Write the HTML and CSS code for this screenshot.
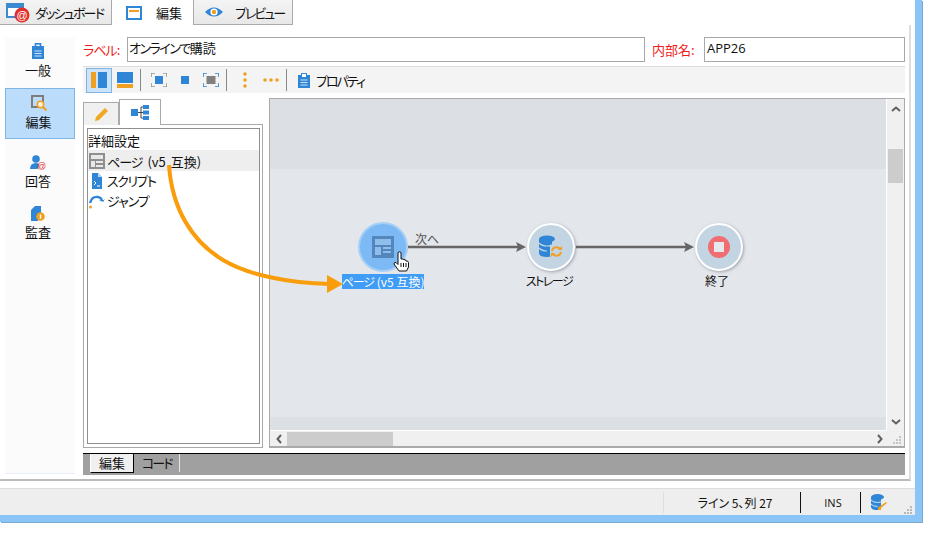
FILE: index.html
```html
<!DOCTYPE html>
<html lang="ja">
<head>
    <meta charset="UTF-8">
    <title>オンラインで購読</title>
    <link rel="stylesheet" href="styles.css">
</head>
<body>
<div class="window">
    <div class="tabs">
        <div class="tab tab-dash">
            <svg class="tab-icon" width="28" height="22" viewBox="0 0 28 22"><rect x="1" y="3" width="16" height="13" fill="#fff" stroke="#3c8ad0" stroke-width="2"/><rect x="1" y="3" width="16" height="4" fill="#3c8ad0"/><circle cx="16" cy="14" r="7.5" fill="#e2302c"/><text x="16" y="18" class="at">@</text></svg>
            <span>ダッシュボード</span>
        </div>
        <div class="tab tab-edit">
            <svg class="tab-icon" width="16" height="14" viewBox="0 0 16 14"><rect x="1" y="1" width="14" height="12" fill="#fff" stroke="#2f86d6" stroke-width="2"/><rect x="3" y="4" width="10" height="2" fill="#f0a020"/></svg>
            <span>編集</span>
        </div>
        <div class="tab tab-preview">
            <svg class="tab-icon" width="18" height="12" viewBox="0 0 18 12"><path d="M0 6Q9 -3 18 6Q9 15 0 6Z" fill="#2f86d6"/><circle cx="9" cy="6" r="3.6" fill="#fff"/><circle cx="9" cy="6" r="2.2" fill="#f0a020"/></svg>
            <span>プレビュー</span>
        </div>
    </div>

    <div class="main">
        <div class="sidebar">
            <div class="side-item">
                <svg width="12" height="16" viewBox="0 0 12 16"><rect y="3" width="12" height="13" fill="#2f86d6"/><rect x="3.500" y="0.800" width="5" height="4" fill="none" stroke="#2f86d6" stroke-width="1.600"/><path d="M2.500 8h7M2.500 10.500h7M2.500 13h7" stroke="#cfe3f6"/></svg>
                <span>一般</span>
            </div>
            <div class="side-item active">
                <svg width="16" height="16" viewBox="0 0 16 16"><path d="M1 1h11v11h-11z" fill="none" stroke="#7d7d7d" stroke-width="2"/><circle cx="9.500" cy="9.500" r="3.200" fill="#fff3dd" stroke="#f0a020" stroke-width="1.500"/><path d="M12 12l3.500 3.500" stroke="#f0a020" stroke-width="2"/></svg>
                <span>編集</span>
            </div>
            <div class="side-item answers">
                <svg width="16" height="15" viewBox="0 0 16 15"><circle cx="6" cy="4" r="3.800" fill="#2f86d6"/><path d="M0 14q0-6 6-6 2.500 0 3.500 1.500l-2 4.500z" fill="#2f86d6"/><text x="11.500" y="14" class="at-small">@</text></svg>
                <span>回答</span>
            </div>
            <div class="side-item">
                <svg width="14" height="16" viewBox="0 0 14 16"><path d="M0 5l4-4h6v7h-3v8H0z" fill="#2f86d6"/><circle cx="9.500" cy="11.500" r="4.300" fill="#f0a020"/><rect x="8.800" y="9.500" width="1.400" height="4.200" fill="#fff"/></svg>
                <span>監査</span>
            </div>
        </div>

        <div class="content">
            <div class="form-row">
                <label class="field-label"><span class="kana">ラベル</span>:</label>
                <div class="input input-label"><span class="kana-wide">オンラインで</span>購読</div>
                <label class="field-label label-name">内部名:</label>
                <div class="input input-name">APP26</div>
            </div>

            <div class="toolbar">
                <div class="tool on"><svg width="16" height="16" viewBox="0 0 16 16"><rect width="5" height="16" fill="#f0a020"/><rect x="7" width="9" height="16" fill="#2f86d6"/></svg></div>
                <div class="tool"><svg width="16" height="16" viewBox="0 0 16 16"><rect width="16" height="11" fill="#2f86d6"/><rect y="12" width="16" height="4" fill="#f0a020"/></svg></div>
                <i class="sep"></i>
                <div class="tool"><svg width="16" height="14" viewBox="0 0 16 14"><rect x="4" y="3" width="8" height="8" fill="#2f86d6"/><path d="M0 4V0h4M12 0h4v4M16 10v4h-4M4 14H0v-4" fill="none" stroke="#999" stroke-width="1.600"/></svg></div>
                <div class="tool"><svg width="16" height="14" viewBox="0 0 16 14"><rect x="4" y="3" width="8" height="8" fill="#2f86d6"/></svg></div>
                <div class="tool"><svg width="16" height="14" viewBox="0 0 16 14"><rect x="3.500" y="3" width="9" height="8" fill="#808080"/><path d="M0 4V0h4M12 0h4v4M16 10v4h-4M4 14H0v-4" fill="none" stroke="#2f86d6" stroke-width="1.600"/></svg></div>
                <i class="sep"></i>
                <div class="tool"><svg width="4" height="16" viewBox="0 0 4 16"><circle cx="2" cy="2" r="1.800" fill="#f0a020"/><circle cx="2" cy="8" r="1.800" fill="#f0a020"/><circle cx="2" cy="14" r="1.800" fill="#f0a020"/></svg></div>
                <div class="tool"><svg width="16" height="4" viewBox="0 0 16 4"><circle cx="2" cy="2" r="1.800" fill="#f0a020"/><circle cx="8" cy="2" r="1.800" fill="#f0a020"/><circle cx="14" cy="2" r="1.800" fill="#f0a020"/></svg></div>
                <i class="sep"></i>
                <div class="tool-text">
                    <svg width="12" height="15" viewBox="0 0 12 15"><rect y="2" width="12" height="13" fill="#2f86d6"/><rect x="3.500" y="0.500" width="5" height="4" fill="#fff" stroke="#2f86d6"/><path d="M2.500 7h7M2.500 9.500h7M2.500 12h7" stroke="#cfe3f6"/></svg>
                    <span>プロパティ</span>
                </div>
            </div>

            <div class="work">
                <div class="left-pane">
                    <div class="pane-tabs">
                        <div class="pane-tab"><svg width="15" height="15" viewBox="0 0 15 15"><path d="M11 1l3 3-9 9-4 1 1-4z" fill="#f0a820"/></svg></div>
                        <div class="pane-tab current"><svg width="18" height="15" viewBox="0 0 18 15"><rect y="4" width="7" height="7" fill="#2f86d6"/><rect x="12" y="0" width="6" height="4" fill="#2f86d6"/><rect x="12" y="5.500" width="6" height="4" fill="#2f86d6"/><rect x="12" y="11" width="6" height="4" fill="#2f86d6"/><path d="M7 7.500h3M10 2v11M10 2h2M10 7.500h2M10 13h2" stroke="#444" fill="none"/></svg></div>
                    </div>
                    <div class="pane-box">
                        <div class="tree">
                            <div class="tree-title">詳細設定</div>
                            <div class="tree-row hover">
                                <svg width="16" height="16" viewBox="0 0 16 16"><rect width="16" height="16" fill="#8f8f8f"/><rect x="2" y="2" width="12" height="4" fill="#e8e8e8"/><rect x="2" y="8" width="4" height="6" fill="#e8e8e8"/><rect x="7" y="8" width="7" height="2" fill="#e8e8e8"/><rect x="7" y="12" width="7" height="2" fill="#e8e8e8"/></svg>
                                <span class="page-name"><span class="kana">ページ</span> (v5 互換)</span>
                            </div>
                            <div class="tree-row">
                                <svg width="16" height="16" viewBox="0 0 16 16"><path d="M3 0h6l4 4v12H3z" fill="#2f86d6"/><path d="M9 0l4 4H9z" fill="#bcd9f3"/><path d="M5 8l2 2-2 2M8 13h3" stroke="#fff" fill="none"/></svg>
                                <span class="row-text kana-wide">スクリプト</span>
                            </div>
                            <div class="tree-row">
                                <svg width="16" height="16" viewBox="0 0 16 16"><path d="M1 10Q3 3 9 4Q12 4.500 13 7" fill="none" stroke="#2f86d6" stroke-width="2.400"/><path d="M10 7h6v-1l-2 3z" fill="#2f86d6"/><circle cx="1.500" cy="14" r="1.500" fill="#f0a020"/></svg>
                                <span class="row-text kana">ジャンプ</span>
                            </div>
                        </div>
                    </div>
                </div>

                <div class="diagram">
                    <div class="canvas">
                        <div class="band band-top"></div>
                        <div class="band band-bottom"></div>
                        <svg class="links" width="617" height="332" viewBox="0 0 617 332">
                            <path d="M138 148H248M306 148H416" stroke="#666" stroke-width="2.500"/>
                            <path d="M256 148l-10-5 2 5-2 5zM424 148l-10-5 2 5-2 5z" fill="#666"/>
                        </svg>
                        <span class="link-label">次へ</span>

                        <div class="node node-page">
                            <div class="disc selected">
                                <svg width="22" height="22" viewBox="0 0 22 22"><rect width="22" height="22" fill="#5286bd"/><rect x="3" y="3" width="16" height="6" fill="#8fbdec"/><rect x="3" y="11" width="6" height="8" fill="#8fbdec"/><rect x="11" y="11" width="8" height="2" fill="#8fbdec"/><rect x="11" y="15" width="8" height="2" fill="#8fbdec"/></svg>
                            </div>
                            <span class="node-label highlighted"><span class="kana">ページ</span> (v5 互換)</span>
                        </div>
                        <div class="node node-store">
                            <div class="disc">
                                <svg width="26" height="24" viewBox="0 0 26 24"><path d="M1 4v14q0 4 8 4 3 0 5-1V4z" fill="#2f86d6"/><ellipse cx="9" cy="4" rx="8" ry="3.500" fill="#2f86d6"/><path d="M1 8q3 3 8 3t8-3M1 13q3 3 8 3" stroke="#c3d5e2" fill="none" stroke-width="1.200"/><rect x="12" y="10" width="13" height="13" fill="#c3d5e2"/><path d="M14 16a4.500 4.500 0 0 1 8-2M23 17a4.500 4.500 0 0 1-8 2" stroke="#f0a020" stroke-width="2" fill="none"/><path d="M20 15h4v-4zM17 18h-4v4z" fill="#f0a020"/></svg>
                            </div>
                            <span class="node-label kana-wide">ストレージ</span>
                        </div>
                        <div class="node node-end">
                            <div class="disc">
                                <svg width="24" height="24" viewBox="0 0 24 24"><circle cx="12" cy="12" r="11" fill="#f06d72"/><rect x="7" y="7" width="10" height="10" fill="#e6e8ee"/></svg>
                            </div>
                            <span class="node-label">終了</span>
                        </div>

                        <svg class="hand" width="17" height="21" viewBox="0 0 17 21"><path d="M5 1.500q1.500-1.500 3 0V8h1.500q1.500 0 1.500 1v-.5q2 0 2 1.500 2-.5 2.500 1.500V16l-2 4H6l-5-7q0-2 2-1.500l2 2z" fill="#fff" stroke="#111"/><path d="M8 12v4M10.500 12v4M13 12v4" stroke="#111"/></svg>
                    </div>
                    <div class="vscroll">
                        <svg width="10" height="6" viewBox="0 0 10 6"><path d="M1 5l4-3.500L9 5" fill="none" stroke="#606060" stroke-width="2"/></svg>
                        <div class="vthumb"></div>
                        <svg class="down" width="10" height="6" viewBox="0 0 10 6"><path d="M1 1l4 3.500L9 1" fill="none" stroke="#606060" stroke-width="2"/></svg>
                    </div>
                    <div class="hscroll">
                        <svg width="6" height="10" viewBox="0 0 6 10"><path d="M5 1L1.500 5 5 9" fill="none" stroke="#606060" stroke-width="2"/></svg>
                        <div class="hthumb"></div>
                        <svg class="right" width="6" height="10" viewBox="0 0 6 10"><path d="M1 1l3.500 4L1 9" fill="none" stroke="#606060" stroke-width="2"/></svg>
                    </div>
                    <div class="grip"><svg width="9" height="9" viewBox="0 0 9 9"><path d="M6 0h2v2H6zM3 3h2v2H3zM6 3h2v2H6zM0 6h2v2H0zM3 6h2v2H3zM6 6h2v2H6z" fill="#c4c4c4"/></svg></div>
                </div>
            </div>

            <div class="source-bar">
                <div class="source-tab current">編集</div>
                <div class="source-tab">コード</div>
            </div>
        </div>
    </div>

    <div class="status">
        <div class="cell cell-pos">ライン 5、列 27</div>
        <div class="cell cell-ins">INS</div>
        <div class="cell cell-db">
            <svg width="16" height="17" viewBox="0 0 16 17"><path d="M0 3v10q0 3 6.500 3 2 0 3.500-.5V3z" fill="#2f86d6"/><ellipse cx="6.500" cy="3" rx="6.500" ry="3" fill="#2f86d6"/><path d="M0 6q2 2.500 6.500 2.500T13 6M0 10q2 2.500 6.500 2.500" stroke="#d5e6f6" fill="none"/><path d="M15 8l1 1-6 5v2H7v-2.500z" fill="#f0a020"/></svg>
        </div>
        <div class="grip status-grip"><svg width="9" height="9" viewBox="0 0 9 9"><path d="M6 0h2v2H6zM3 3h2v2H3zM6 3h2v2H6zM0 6h2v2H0zM3 6h2v2H3zM6 6h2v2H6z" fill="#b8b8b8"/></svg></div>
    </div>

    <svg class="callout" width="200" height="150" viewBox="0 0 200 150">
        <path d="M21 15C24 60 45 92 75 110C100 125 140 133 182 134" fill="none" stroke="#fa9d0c" stroke-width="4"/>
        <path d="M195 134l-16-9v18z" fill="#fa9d0c"/>
    </svg>
</div>
</body>
</html>
```

FILE: styles.css
```css
* {
    margin: 0;
    padding: 0;
    box-sizing: border-box;
}
body {
    width: 938px;
    height: 545px;
    overflow: hidden;
    background: #fff;
    color: #111;
    font-family: "Noto Sans CJK JP", "Noto Sans", sans-serif;
    font-size: 12px;
    font-feature-settings: "palt";
}
.kana { letter-spacing: -1px; }
.kana-wide { letter-spacing: -1.5px; }
.window {
    position: relative;
    width: 922px;
    height: 522px;
    display: flex;
    flex-direction: column;
    background: #fff;
    border-right: 7px solid #8bc4f7;
    border-bottom: 7px solid #8bc4f7;
    box-shadow: 1px 1px 0 #7aa8cf;
}

/* top tabs */
.tabs {
    display: flex;
    height: 25px;
    flex: none;
}
.tab {
    display: flex;
    align-items: center;
    height: 25px;
    font-size: 13px;
    white-space: nowrap;
}
.tab-dash, .tab-preview {
    background: linear-gradient(#f4f4f4, #e8e8e8);
    border-bottom: 1px solid #aaa;
}
.tab-dash {
    width: 112px;
    padding-left: 6px;
    border-right: 1px solid #aaa;
}
.tab-dash span {
    margin-left: 1px;
    letter-spacing: -1.8px;
}
.tab-edit {
    width: 81px;
    padding-left: 14px;
}
.tab-edit span { margin-left: 14px; }
.tab-preview {
    width: 100px;
    padding-left: 11px;
    border-left: 1px solid #aaa;
    border-right: 1px solid #aaa;
}
.tab-preview span {
    margin-left: 12px;
    letter-spacing: -2px;
}
.at {
    fill: #fff;
    font-size: 11px;
    text-anchor: middle;
    font-family: "Liberation Sans", sans-serif;
}
.at-small {
    fill: #e2302c;
    font-size: 9px;
    font-family: "Liberation Sans", sans-serif;
    text-anchor: middle;
}

/* main area */
.main {
    flex: 1;
    display: flex;
    padding-top: 12px;
    padding-left: 5px;
    margin-bottom: 7px;
    border-bottom: 2px solid #bbb;
    border-right: 2px solid #ddd;
    margin-right: 4px;
    min-height: 0;
}
.sidebar {
    width: 70px;
    flex: none;
    height: 437px;
    background: #fbfbfb;
    border-bottom: 1px solid #e6effa;
}
.side-item {
    height: 51px;
    display: flex;
    flex-direction: column;
    align-items: center;
    justify-content: flex-end;
    gap: 2px;
    padding: 0 4px 9px 0;
    font-size: 13px;
    line-height: 18px;
}
.side-item.active {
    background: #bcdcfb;
    border: 1px solid #7fb5e6;
    padding: 0 3px 7px 0;
}
.side-item.answers { margin-top: 9px; }
.content {
    width: 822px;
    margin-left: 8px;
    flex: none;
    display: flex;
    flex-direction: column;
}

/* label row */
.form-row {
    display: flex;
    align-items: center;
    height: 25px;
}
.field-label {
    color: #f01c1c;
    font-size: 13px;
    width: 44px;
}
.label-name {
    margin-left: 7px;
    width: 52px;
}
.input {
    height: 25px;
    border: 1px solid #a8a8a8;
    padding-left: 1px;
    font-size: 13px;
    line-height: 20px;
}
.input-label { width: 518px; }
.input-name {
    width: 201px;
    padding-left: 2px;
    font-family: "Open Sans", sans-serif;
}

/* toolbar */
.toolbar {
    margin-top: 4px;
    height: 27px;
    display: flex;
    align-items: center;
    padding-left: 3px;
    background: #f4f4f4;
    border-top: 1px solid #ddd;
}
.tool {
    width: 26px;
    height: 25px;
    display: flex;
    align-items: center;
    justify-content: center;
}
.tool.on {
    background: #cde4f8;
    border: 1px solid #7fb5e6;
}
.sep {
    width: 1px;
    height: 22px;
    margin: 0 5px 0 2px;
    background: #888;
}
.tool-text {
    display: flex;
    align-items: center;
    gap: 6px;
    margin-left: 6px;
    font-size: 13px;
}
.tool-text span { letter-spacing: -2px; }

/* panes */
.work {
    display: flex;
    margin-top: 5px;
    height: 350px;
}
.left-pane {
    width: 180px;
    flex: none;
    display: flex;
    flex-direction: column;
}
.pane-tabs {
    display: flex;
    align-items: flex-end;
    height: 26px;
    flex: none;
    position: relative;
    top: 1px;
}
.pane-tab {
    width: 36px;
    height: 23px;
    display: flex;
    align-items: center;
    justify-content: center;
    background: #f0f0f0;
    border: 1px solid #aaa;
    border-bottom: none;
}
.pane-tab.current {
    width: 42px;
    height: 26px;
    background: #fff;
    border-left: 1px solid #aaa;
}
.pane-box {
    flex: 1;
    padding: 3px 2px 3px 3px;
    border: 1px solid #aaa;
}
.tree {
    height: 100%;
    border: 1px solid #8f8f8f;
}
.tree-title {
    height: 21px;
    font-size: 13px;
    line-height: 24px;
}
.tree-row {
    height: 20px;
    display: flex;
    align-items: center;
    gap: 2px;
    padding-left: 1px;
    font-size: 13px;
}
.tree-row.hover {
    height: 21px;
    background: #eee;
}
.row-text { margin-bottom: 2px; }
.page-name {
    margin-top: 1px;
    word-spacing: 2px;
}

.diagram {
    width: 636px;
    height: 350px;
    margin-left: 6px;
    flex: none;
    display: grid;
    grid-template-columns: 1fr 17px;
    grid-template-rows: 1fr 15px;
    border: 1px solid #aaa;
    border-bottom-width: 2px;
    background: #f0f0f0;
}
.canvas {
    position: relative;
    background: #e3e6ea;
    overflow: hidden;
    border-bottom: 1px solid #fff;
    border-right: 1px solid #fff;
}
.band {
    position: absolute;
    left: 0;
    right: 0;
    background: #dcdfe3;
}
.band-top {
    top: 0;
    height: 70px;
}
.band-bottom {
    bottom: 0;
    height: 13px;
}
.links {
    position: absolute;
    left: 0;
    top: 0;
}
.link-label {
    position: absolute;
    left: 145px;
    top: 132px;
    font-size: 12px;
    line-height: 16px;
    color: #555;
}
.node {
    position: absolute;
    top: 124px;
    width: 100px;
    display: flex;
    flex-direction: column;
    align-items: center;
}
.node-page { left: 63px; top: 123px; }
.node-store { left: 229px; }
.node-end { left: 397px; }
.disc {
    width: 48px;
    height: 48px;
    border-radius: 50%;
    border: 2px solid #fff;
    background: #c3d5e2;
    box-shadow: 1px 1px 3px rgba(90, 100, 120, 0.5);
    display: flex;
    align-items: center;
    justify-content: center;
}
.node-store .disc { margin-left: 4px; }
.node-end .disc { margin-left: 4px; }
.disc.selected {
    width: 50px;
    height: 50px;
    border: 2px solid #a5cff7;
    background: #7cb9f5;
    box-shadow: none;
}
.node-label {
    margin-top: 2px;
    font-size: 12px;
    line-height: 15px;
    white-space: nowrap;
}
.highlighted {
    background: #3f9cf7;
    color: #fff;
}
.hand {
    position: absolute;
    left: 123px;
    top: 152px;
}

/* scrollbars */
.vscroll {
    display: flex;
    flex-direction: column;
    align-items: center;
    padding-top: 7px;
}
.vthumb {
    width: 15px;
    height: 34px;
    margin-top: 37px;
    background: #ccc;
}
.vscroll .down { margin-top: auto; margin-bottom: 6px; }
.hscroll {
    display: flex;
    align-items: center;
    padding-left: 6px;
}
.hthumb {
    width: 106px;
    height: 14px;
    margin-left: 5px;
    background: #ccc;
}
.hscroll .right { margin-left: auto; margin-right: 4px; }
.grip {
    display: flex;
    align-items: flex-end;
    justify-content: flex-end;
    padding: 0 2px 1px 0;
}

/* code/edit switch */
.source-bar {
    margin-top: 5px;
    height: 22px;
    display: flex;
    padding-left: 7px;
    background: #a0a0a0;
    border-top: 1px solid #000;
}
.source-tab {
    height: 18px;
    padding: 0 8px;
    font-size: 13px;
    line-height: 18px;
    letter-spacing: -2px;
    border-right: 1px solid #e8e8e8;
}
.source-tab.current {
    padding: 0 8px;
    letter-spacing: 0;
    background: #f0f0f0;
    border-left: 1px solid #fff;
    border-right: 1px solid #000;
    border-bottom: 1px solid #000;
    height: 19px;
}

/* status bar */
.status {
    height: 27px;
    flex: none;
    display: flex;
    align-items: stretch;
    padding-left: 663px;
    background: #eee;
    border-top: 1px solid #ddd;
    position: relative;
}
.cell {
    display: flex;
    align-items: center;
    justify-content: center;
    height: 21px;
    margin-top: 3px;
    font-size: 12px;
}
.cell-pos {
    width: 137px;
    padding-left: 6px;
    border-left: 1px solid #ddd;
}
.cell-ins {
    width: 60px;
    padding-left: 5px;
    border-left: 1px solid #111;
    font-family: "Open Sans", sans-serif;
    font-size: 11px;
}
.cell-db {
    width: 40px;
    border-left: 1px solid #111;
    justify-content: flex-start;
    padding-left: 10px;
}
.status-grip {
    position: absolute;
    right: 2px;
    bottom: 0;
    padding: 0;
}

/* arrow drawn over the screenshot */
.callout {
    position: absolute;
    left: 148px;
    top: 150px;
    pointer-events: none;
}
```
